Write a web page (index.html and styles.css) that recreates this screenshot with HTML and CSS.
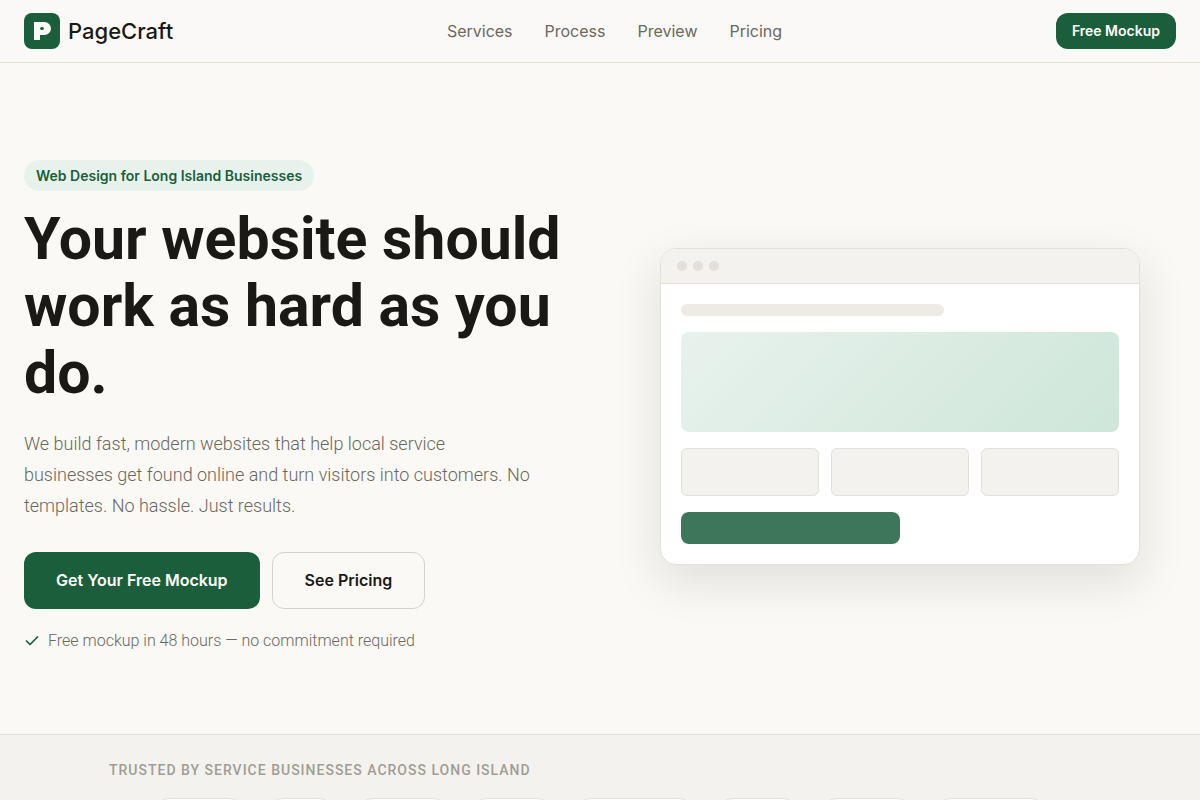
FILE: index.html
```html
<!DOCTYPE html>
<html lang="en">
<head>
    <meta charset="UTF-8">
    <meta name="viewport" content="width=device-width, initial-scale=1.0">
    <title>PageCraft</title>
    <link rel="stylesheet" href="styles.css">
</head>
<body>
    <header class="site-header">
        <div class="container header-inner">
            <a href="#" class="logo">
                <svg class="logo-mark" viewBox="0 0 36 36" aria-hidden="true">
                    <rect width="36" height="36" rx="8" fill="#1b5e3b"/>
                    <path d="M10 9h10.500a6.500 6.500 0 0 1 0 13H16v5h-6z" fill="#faf9f6"/>
                    <ellipse cx="18" cy="15.500" rx="2" ry="1.500" fill="#1b5e3b"/>
                </svg>
                <span>PageCraft</span>
            </a>
            <nav class="nav">
                <a href="#services">Services</a>
                <a href="#process">Process</a>
                <a href="#preview">Preview</a>
                <a href="#pricing">Pricing</a>
            </nav>
            <a href="#mockup" class="btn btn-primary btn-small">Free Mockup</a>
        </div>
    </header>

    <main>
        <section class="hero">
            <div class="container hero-grid">
                <div class="hero-content">
                    <span class="badge">Web Design for Long Island Businesses</span>
                    <h1>Your website should work as hard as you do.</h1>
                    <p class="hero-text">We build fast, modern websites that help local service businesses get found online and turn visitors into customers. No templates. No hassle. Just results.</p>
                    <div class="hero-actions">
                        <a href="#mockup" class="btn btn-primary">Get Your Free Mockup</a>
                        <a href="#pricing" class="btn btn-outline">See Pricing</a>
                    </div>
                    <p class="hero-note">
                        <svg width="16" height="16" viewBox="0 0 16 16" fill="none" aria-hidden="true">
                            <path d="M13.500 4L6 11.500 2.500 8" stroke="#1b5e3b" stroke-width="1.750" stroke-linecap="round" stroke-linejoin="round"/>
                        </svg>
                        <span>Free mockup in 48 hours — no commitment required</span>
                    </p>
                </div>

                <div class="browser">
                    <div class="browser-bar">
                        <span class="dot"></span>
                        <span class="dot"></span>
                        <span class="dot"></span>
                    </div>
                    <div class="browser-body">
                        <div class="mock-line"></div>
                        <div class="mock-banner"></div>
                        <div class="mock-cards">
                            <div class="mock-card"></div>
                            <div class="mock-card"></div>
                            <div class="mock-card"></div>
                        </div>
                        <div class="mock-button"></div>
                    </div>
                </div>
            </div>
        </section>

        <section class="trust">
            <div class="trust-inner">
                <p class="trust-label">Trusted by service businesses across Long Island</p>
                <div class="chips">
                    <span class="chip chip-md"></span>
                    <span class="chip chip-sm"></span>
                    <span class="chip chip-md"></span>
                    <span class="chip"></span>
                    <span class="chip chip-xl"></span>
                    <span class="chip"></span>
                    <span class="chip chip-md"></span>
                    <span class="chip chip-lg"></span>
                </div>
            </div>
        </section>
    </main>
</body>
</html>
```
FILE: styles.css
```css
* {
    margin: 0;
    padding: 0;
    box-sizing: border-box;
}

:root {
    --green: #1b5e3b;
    --green-light: #e8f2ed;
    --bg: #faf9f6;
    --surface: #f3f2ee;
    --border: #e2e0d9;
    --text: #1a1915;
    --muted: #6b6860;
}

body {
    background: var(--bg);
    color: var(--text);
    font-family: Roboto, sans-serif;
    font-size: 16px;
    line-height: 24px;
}

a {
    color: inherit;
    text-decoration: none;
}

.container {
    max-width: 1200px;
    margin: 0 auto;
    padding: 0 24px;
}

/* Header */
.site-header {
    background: #faf9f7;
    border-bottom: 1px solid var(--border);
}

.header-inner {
    display: flex;
    align-items: center;
    justify-content: space-between;
    padding-top: 13px;
    padding-bottom: 13px;
}

.logo {
    display: flex;
    align-items: center;
    gap: 8px;
    font-family: Inter, sans-serif;
    font-size: 22px;
    font-weight: 500;
}

.logo-mark {
    width: 36px;
    height: 36px;
}

.nav {
    display: flex;
    gap: 32px;
    color: var(--muted);
    font-family: Inter, sans-serif;
}

.btn {
    padding: 17px 32px;
    border-radius: 12px;
    font-family: Inter, sans-serif;
    font-size: 16px;
    font-weight: 600;
    line-height: 23px;
}

.btn-primary {
    background: var(--green);
    color: #fff;
}

.btn-outline {
    padding: 16px 32px;
    border: 1px solid #d4d2ca;
}

.btn-small {
    padding: 6px 16px;
    font-size: 14px;
    line-height: 24px;
}

/* Hero */
.hero {
    padding: 97px 0 81px;
}

.hero-grid {
    display: grid;
    grid-template-columns: 1fr 1fr;
    gap: 48px;
    align-items: center;
}

.badge {
    display: block;
    width: fit-content;
    padding: 4px 12px;
    border-radius: 100px;
    background: var(--green-light);
    color: var(--green);
    font-family: Inter, sans-serif;
    font-size: 14px;
    font-weight: 600;
    line-height: 23px;
}

h1 {
    margin: 14px 0 22px;
    font-size: 59px;
    font-weight: 700;
    line-height: 67px;
}

.hero-text {
    max-width: 512px;
    margin-bottom: 31px;
    color: var(--muted);
    font-size: 18px;
    font-weight: 300;
    line-height: 31px;
}

.hero-actions {
    display: flex;
    flex-wrap: wrap;
    gap: 12px;
    margin-bottom: 20px;
}

.hero-note {
    display: flex;
    align-items: center;
    gap: 8px;
    color: var(--muted);
    font-weight: 300;
}

.browser {
    width: 100%;
    max-width: 480px;
    justify-self: center;
    border: 1px solid var(--border);
    border-radius: 16px;
    background: #fff;
    box-shadow: 0 16px 48px rgba(26, 25, 21, 0.12);
    overflow: hidden;
}

.browser-bar {
    display: flex;
    gap: 6px;
    padding: 12px 16px;
    background: var(--surface);
    border-bottom: 1px solid var(--border);
}

.dot {
    width: 10px;
    height: 10px;
    border-radius: 50%;
    background: #e4dfda;
}

.browser-body {
    display: grid;
    gap: 16px;
    padding: 20px;
}

.mock-line {
    width: 60%;
    height: 12px;
    border-radius: 6px;
    background: #eeebe4;
}

.mock-banner {
    height: 100px;
    border-radius: 8px;
    background: linear-gradient(135deg, #e8f2ed, #cee6d9);
}

.mock-cards {
    display: grid;
    grid-template-columns: repeat(3, 1fr);
    gap: 12px;
}

.mock-card {
    height: 48px;
    border: 1px solid var(--border);
    border-radius: 6px;
    background: var(--surface);
}

.mock-button {
    width: 50%;
    height: 32px;
    border-radius: 8px;
    background: #3d7658;
}

/* Trust strip */
.trust {
    padding: 24px;
    background: var(--surface);
    border-top: 1px solid var(--border);
}

.trust-inner {
    max-width: 982px;
    margin: 0 auto;
}

.trust-label {
    margin-bottom: 16px;
    color: #a09d94;
    font-size: 14px;
    font-weight: 500;
    letter-spacing: 1px;
    line-height: 23px;
    text-transform: uppercase;
}

.chips {
    display: flex;
    justify-content: center;
    gap: 16px;
}

.chip {
    width: 88px;
    height: 40px;
    border: 1px solid var(--border);
    border-radius: 20px;
    background: #fff;
}

.chip-sm {
    width: 74px;
}

.chip-md {
    width: 98px;
}

.chip-lg {
    width: 118px;
}

.chip-xl {
    width: 126px;
}
```
